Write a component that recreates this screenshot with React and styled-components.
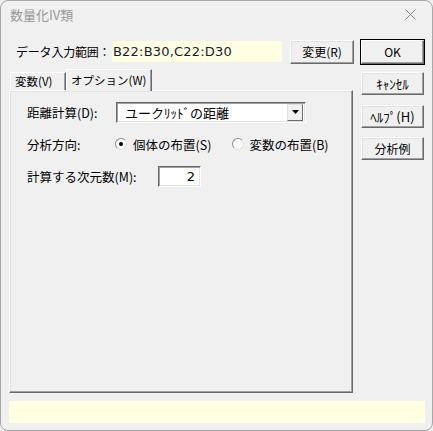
import React from "react";
import styled, {createGlobalStyle} from "styled-components";

const GlobalStyle = createGlobalStyle`
  html, body {
    margin: 0;
    padding: 0;
    background: #f0f0f0;
  }
  body {
    font-family: "Noto Sans CJK JP", "Noto Sans", sans-serif;
    font-size: 12px;
    color: #000;
  }
`;

const Window = styled.div`
  box-sizing: border-box;
  width: 433px;
  height: 431px;
  border: 1px solid #a8a8a8;
  border-radius: 8px;
  background: #f0f0f0;
  display: flex;
  flex-direction: column;
  overflow: hidden;
`;

const TitleBar = styled.div`
  height: 28px;
  display: flex;
  align-items: center;
  justify-content: space-between;
  padding: 0 16px 2px 9px;
  color: #999;
  font-size: 13px;
`;

const Body = styled.div`
  flex: 1;
  display: flex;
  gap: 8px;
  padding: 10px 8px 0 8px;
`;

const LeftCol = styled.div`
  width: 344px;
  display: flex;
  flex-direction: column;
`;

const RightCol = styled.div`
  width: 63px;
  display: flex;
  flex-direction: column;
`;

const RangeRow = styled.div`
  display: flex;
  align-items: center;
  height: 24px;
`;

const RangeLabel = styled.span`
  flex-shrink: 0;
  white-space: nowrap;
  margin-left: 7px;
  width: 96px;
  font-size: 12px;
  letter-spacing: -0.2px;
`;

const RangeField = styled.div`
  flex-shrink: 0;
  width: 169px;
  height: 21px;
  background: #ffffe1;
  display: flex;
  align-items: center;
  padding-left: 1px;
  font-family: "DejaVu Sans", sans-serif;
  font-size: 13px;
  color: #1a1a3a;
  letter-spacing: 0.2px;
`;

const Button = styled.button`
  box-sizing: border-box;
  flex-shrink: 0;
  width: ${(p) => p.w || 63}px;
  height: ${(p) => p.h || 23}px;
  margin-top: ${(p) => p.mt || 0}px;
  margin-left: ${(p) => p.ml || 0}px;
  padding: 0;
  background: #f0f0f0;
  font-family: "Noto Sans CJK JP", sans-serif;
  font-size: ${(p) => p.fs || 12}px;
  color: #000;
  white-space: nowrap;
  border-style: solid;
  border-width: 1px;
  border-color: #fff #6a6a6a #6a6a6a #fff;
  box-shadow: ${(p) =>
    p.primary
      ? "0 0 0 1px #000, inset -1px -1px 0 #a0a0a0"
      : "inset -1px -1px 0 #a0a0a0, inset 1px 1px 0 #e3e3e3"};
`;

const TabStrip = styled.div`
  display: flex;
  align-items: flex-end;
  height: 21px;
  margin-top: 5px;
  padding-left: 1px;
  position: relative;
  z-index: 1;
`;

const Tab = styled.div`
  box-sizing: border-box;
  flex-shrink: 0;
  width: ${(p) => p.w}px;
  height: ${(p) => (p.active ? 22 : 18)}px;
  margin-bottom: ${(p) => (p.active ? -1 : 0)}px;
  padding-left: 4px;
  display: flex;
  align-items: center;
  white-space: nowrap;
  background: #f0f0f0;
  border-style: solid;
  border-width: 1px 1px 0 1px;
  border-color: #fff #6a6a6a transparent #fff;
  box-shadow: inset -1px 0 0 #a0a0a0;
  font-size: 11.5px;
`;

const Panel = styled.div`
  box-sizing: border-box;
  width: 344px;
  height: 303px;
  border-style: solid;
  border-width: 1px;
  border-color: #fff #6a6a6a #6a6a6a #fff;
  box-shadow: inset -1px -1px 0 #a0a0a0, inset 1px 1px 0 #e3e3e3;
  padding: 11px 0 0 17px;
  display: flex;
  flex-direction: column;
`;

const FieldRow = styled.div`
  display: flex;
  align-items: center;
  height: 21px;
  margin-top: ${(p) => p.mt || 0}px;
`;

const FieldLabel = styled.span`
  flex-shrink: 0;
  width: ${(p) => p.w}px;
  font-size: 12.5px;
  white-space: nowrap;
`;

const Combo = styled.div`
  box-sizing: border-box;
  width: 190px;
  height: 21px;
  background: #fff;
  border-style: solid;
  border-width: 1px;
  border-color: #6a6a6a #fff #fff #6a6a6a;
  box-shadow: inset 1px 1px 0 #a0a0a0, inset -1px -1px 0 #e3e3e3;
  display: flex;
  align-items: center;
  justify-content: space-between;
  padding: 0 2px 0 8px;
  font-size: 13px;
`;

const ComboArrow = styled.div`
  box-sizing: border-box;
  width: 16px;
  height: 17px;
  background: #f0f0f0;
  border-style: solid;
  border-width: 1px;
  border-color: #e3e3e3 #6a6a6a #6a6a6a #e3e3e3;
  display: flex;
  align-items: center;
  justify-content: center;
`;

const Radio = styled.span`
  box-sizing: border-box;
  flex-shrink: 0;
  width: 12px;
  height: 12px;
  border-radius: 50%;
  background: #fff;
  border: 1px solid;
  border-color: #8a8a8a #e0e0e0 #e0e0e0 #8a8a8a;
  display: inline-flex;
  align-items: center;
  justify-content: center;
  margin: ${(p) => p.m};
  &::after {
    content: "";
    width: 4px;
    height: 4px;
    border-radius: 50%;
    background: ${(p) => (p.checked ? "#000" : "transparent")};
  }
`;

const RadioText = styled.span`
  font-size: 12.5px;
  white-space: nowrap;
`;

const NumberBox = styled.div`
  box-sizing: border-box;
  width: 43px;
  height: 21px;
  background: #fff;
  border-style: solid;
  border-width: 1px;
  border-color: #6a6a6a #fff #fff #6a6a6a;
  box-shadow: inset 1px 1px 0 #a0a0a0, inset -1px -1px 0 #e3e3e3;
  display: flex;
  align-items: center;
  justify-content: flex-end;
  padding-right: 5px;
  font-family: "DejaVu Sans", sans-serif;
  font-size: 13px;
`;

const StatusBar = styled.div`
  height: 23px;
  margin: 8px 7px 7px 8px;
  background: #ffffe1;
`;

const CloseIcon = () => (
  <svg width="11" height="11" viewBox="0 0 11 11">
    <path d="M0.5 0.5L10.5 10.5M10.5 0.5L0.5 10.5" stroke="#8a8a8a" strokeWidth="1" />
  </svg>
);

export default function App() {
  return (
    <>
      <GlobalStyle />
      <Window>
        <TitleBar>
          <span>数量化IV類</span>
          <CloseIcon />
        </TitleBar>
        <Body>
          <LeftCol>
            <RangeRow>
              <RangeLabel>データ入力範囲：</RangeLabel>
              <RangeField>B22:B30,C22:D30</RangeField>
              <Button w={64} h={24} ml={8}>変更(R)</Button>
            </RangeRow>
            <TabStrip>
              <Tab w={56}>変数(V)</Tab>
              <Tab active w={86}>オプション(W)</Tab>
            </TabStrip>
            <Panel>
              <FieldRow>
                <FieldLabel w={89}>距離計算(D):</FieldLabel>
                <Combo>
                  <span>ユークﾘｯﾄﾞの距離</span>
                  <ComboArrow>
                    <svg width="7" height="4" viewBox="0 0 7 4">
                      <path d="M0 0h7L3.5 4z" fill="#000" />
                    </svg>
                  </ComboArrow>
                </Combo>
              </FieldRow>
              <FieldRow mt={11}>
                <FieldLabel w={88}>分析方向:</FieldLabel>
                <Radio checked m="0 6px 0 0" />
                <RadioText>個体の布置(S)</RadioText>
                <Radio m="0 5px 0 21px" />
                <RadioText>変数の布置(B)</RadioText>
              </FieldRow>
              <FieldRow mt={11}>
                <FieldLabel w={131}>計算する次元数(M):</FieldLabel>
                <NumberBox>2</NumberBox>
              </FieldRow>
            </Panel>
          </LeftCol>
          <RightCol>
            <Button primary h={24}>OK</Button>
            <Button mt={8} fs={13}>ｷｬﾝｾﾙ</Button>
            <Button mt={10} fs={13}>ﾍﾙﾌﾟ(H)</Button>
            <Button mt={9}>分析例</Button>
          </RightCol>
        </Body>
        <StatusBar />
      </Window>
    </>
  );
}
